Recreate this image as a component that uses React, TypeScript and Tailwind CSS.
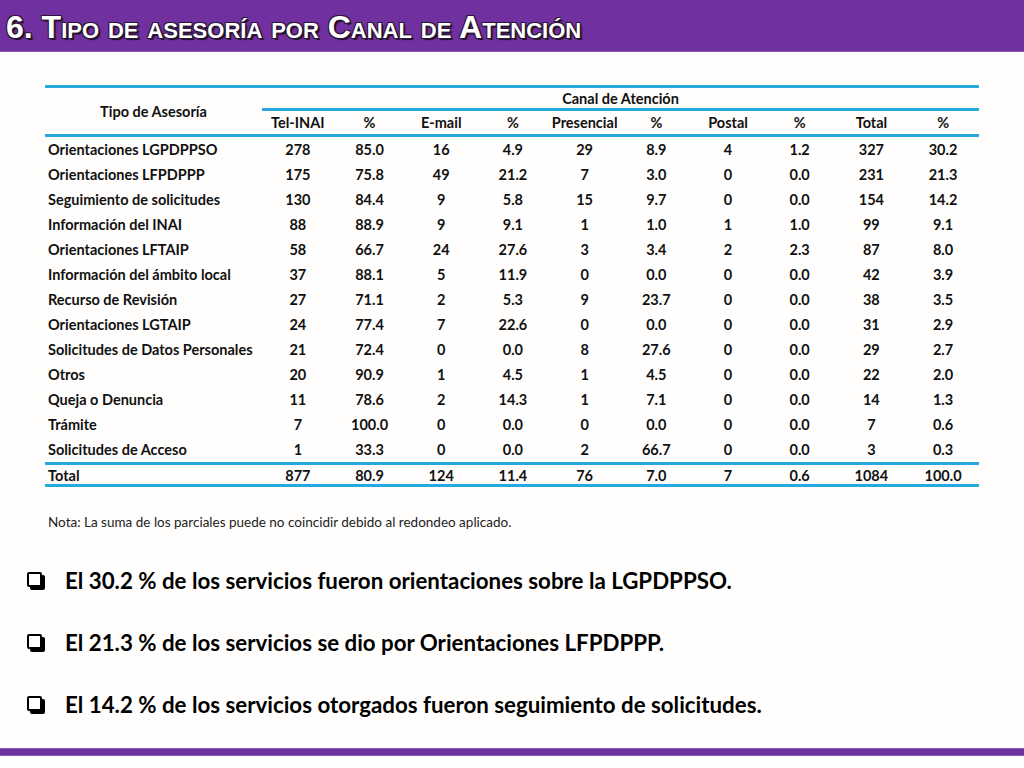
import React from 'react'

const rows: [string, ...string[]][] = [
  ['Orientaciones LGPDPPSO', '278', '85.0', '16', '4.9', '29', '8.9', '4', '1.2', '327', '30.2'],
  ['Orientaciones LFPDPPP', '175', '75.8', '49', '21.2', '7', '3.0', '0', '0.0', '231', '21.3'],
  ['Seguimiento de solicitudes', '130', '84.4', '9', '5.8', '15', '9.7', '0', '0.0', '154', '14.2'],
  ['Información del INAI', '88', '88.9', '9', '9.1', '1', '1.0', '1', '1.0', '99', '9.1'],
  ['Orientaciones LFTAIP', '58', '66.7', '24', '27.6', '3', '3.4', '2', '2.3', '87', '8.0'],
  ['Información del ámbito local', '37', '88.1', '5', '11.9', '0', '0.0', '0', '0.0', '42', '3.9'],
  ['Recurso de Revisión', '27', '71.1', '2', '5.3', '9', '23.7', '0', '0.0', '38', '3.5'],
  ['Orientaciones LGTAIP', '24', '77.4', '7', '22.6', '0', '0.0', '0', '0.0', '31', '2.9'],
  ['Solicitudes de Datos Personales', '21', '72.4', '0', '0.0', '8', '27.6', '0', '0.0', '29', '2.7'],
  ['Otros', '20', '90.9', '1', '4.5', '1', '4.5', '0', '0.0', '22', '2.0'],
  ['Queja o Denuncia', '11', '78.6', '2', '14.3', '1', '7.1', '0', '0.0', '14', '1.3'],
  ['Trámite', '7', '100.0', '0', '0.0', '0', '0.0', '0', '0.0', '7', '0.6'],
  ['Solicitudes de Acceso', '1', '33.3', '0', '0.0', '2', '66.7', '0', '0.0', '3', '0.3'],
]

const total = ['Total', '877', '80.9', '124', '11.4', '76', '7.0', '7', '0.6', '1084', '100.0']

const subHeads = ['Tel-INAI', '%', 'E-mail', '%', 'Presencial', '%', 'Postal', '%', 'Total', '%']

const bullets = [
  'El 30.2 % de los servicios fueron orientaciones sobre la LGPDPPSO.',
  'El 21.3 % de los servicios se dio por Orientaciones LFPDPPP.',
  'El 14.2 % de los servicios otorgados fueron seguimiento de solicitudes.',
]

function Row({ cells, className }: { cells: string[]; className: string }) {
  return (
    <div className={`grid grid-cols-[217px_repeat(10,71.7px)] items-center ${className}`}>
      <div className="pl-[3px]">{cells[0]}</div>
      {cells.slice(1).map((c, i) => (
        <div key={i} className="text-center">{c}</div>
      ))}
    </div>
  )
}

// shadowed square bullet, like the Wingdings one in the slide
function CheckBox() {
  return (
    <span className="relative inline-block w-[18px] h-[18px] shrink-0">
      <span className="absolute left-[3px] top-[3px] w-[15px] h-[15px] bg-black rounded-[2px]" />
      <span className="absolute left-0 top-0 w-[15px] h-[15px] border-2 border-black bg-white rounded-[2px]" />
    </span>
  )
}

export default function App() {
  return (
    <div className="relative w-[1024px] h-[768px] bg-[#fffefc] overflow-hidden font-['Lato',sans-serif] text-[#111]">
      {/* Title bar */}
      <div className="h-[52px] bg-[#7030a0] border-b border-[#8a55b5] flex items-center pl-[6px]">
        <h1 className="font-['Liberation_Sans',Arial,sans-serif] font-bold text-[32px] text-white [font-variant:small-caps] leading-none pt-[2px] [text-shadow:1px_1px_0_#2b1638,-1px_-1px_0_#2b1638,1px_-1px_0_#2b1638,-1px_1px_0_#2b1638,2px_2px_1px_#1a0d22]">
          6. Tipo de asesoría por Canal de Atención
        </h1>
      </div>

      {/* Table */}
      <div className="ml-[45px] mt-[33px] w-[934px] text-[14.5px] font-bold">
        <div className="border-t-[3px] border-b-[3px] border-[#29a8e0] flex">
          <div className="w-[217px] flex items-center justify-center pt-[2px]">Tipo de Asesoría</div>
          <div className="flex-1">
            <div className="h-[23px] flex items-center justify-center border-b-[3px] border-[#29a8e0] pt-[2px]">Canal de Atención</div>
            <div className="h-[23px] grid grid-cols-10 items-center">
              {subHeads.map((h, i) => (
                <div key={i} className="text-center">{h}</div>
              ))}
            </div>
          </div>
        </div>
        {rows.map((r, i) => (
          <Row key={i} cells={r} className="h-[25px]" />
        ))}
        <Row cells={total} className="h-[25px] border-t-[3px] border-b-[3px] border-[#29a8e0]" />
      </div>

      <p className="ml-[48px] mt-[25px] text-[13.5px] text-[#222]">
        Nota: La suma de los parciales puede no coincidir debido al redondeo aplicado.
      </p>

      {/* Bullets */}
      <div className="ml-[27px] mt-[36px] flex flex-col gap-[36px]">
        {bullets.map((b, i) => (
          <div key={i} className="flex items-center gap-[20px] h-[26px]">
            <CheckBox />
            <span className="text-[22.3px] font-bold text-black leading-none">{b}</span>
          </div>
        ))}
      </div>

      <div className="absolute left-0 right-0 top-[748px] h-[8px] bg-[#7030a0] border-y border-[#8c5cb8]" />
    </div>
  )
}
